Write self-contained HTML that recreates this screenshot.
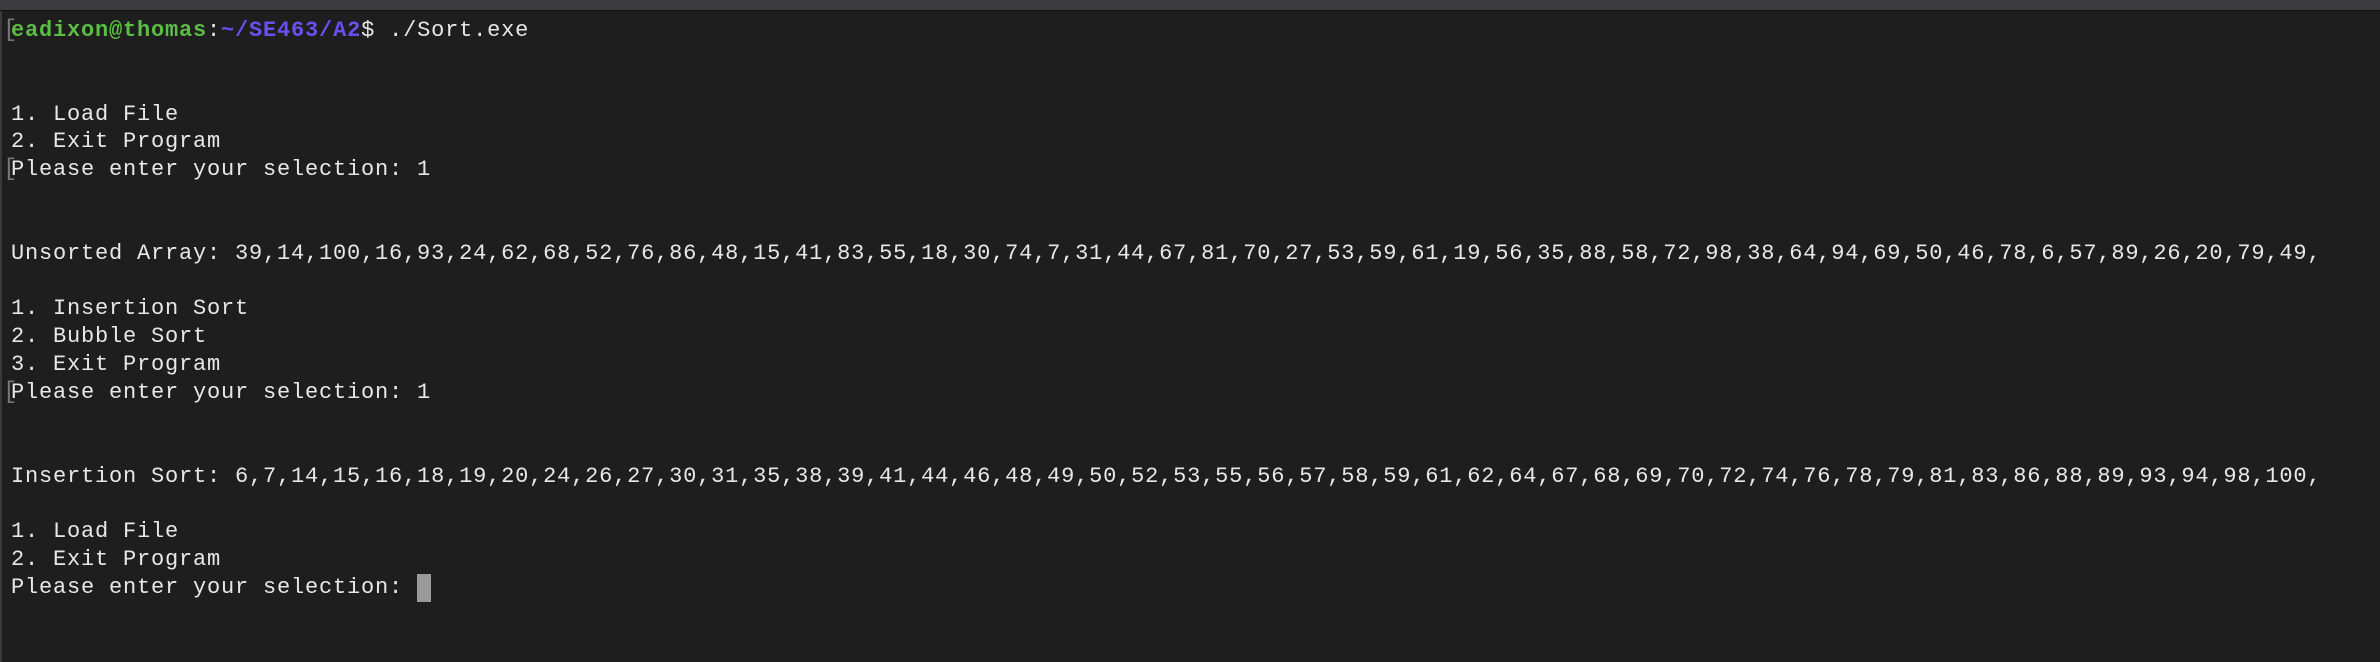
<!DOCTYPE html>
<html><head><meta charset="utf-8"><style>
html,body{margin:0;padding:0;width:2380px;height:662px;overflow:hidden;background:#1e1e1e;}
.top{position:absolute;left:0;top:0;width:2380px;height:10px;background:#3b3a3f;border-bottom:1px solid #111;}
.lb{position:absolute;left:0;top:11px;width:2px;height:651px;background:#3a3a3a;}
pre{position:absolute;left:11px;top:17px;margin:0;font-family:"Liberation Mono",monospace;font-size:22px;letter-spacing:0.8px;line-height:27.85px;color:#e8e8e8;white-space:pre;}
.g{color:#5cbd45;font-weight:bold}
.b{color:#6a4ff2;font-weight:bold}
.br{position:absolute;left:3px;font-family:"Liberation Mono",monospace;font-size:24px;color:#777;line-height:27.85px;}
.cur{display:inline-block;width:14px;height:28px;background:#9a9a9a;vertical-align:top;}
</style></head><body>
<div class="top"></div><div class="lb"></div>
<div class="br" style="top:17px">[</div>
<div class="br" style="top:156px">[</div>
<div class="br" style="top:379px">[</div>
<pre><span class="g">eadixon@thomas</span>:<span class="b">~/SE463/A2</span>$ ./Sort.exe


1. Load File
2. Exit Program
Please enter your selection: 1


Unsorted Array: 39,14,100,16,93,24,62,68,52,76,86,48,15,41,83,55,18,30,74,7,31,44,67,81,70,27,53,59,61,19,56,35,88,58,72,98,38,64,94,69,50,46,78,6,57,89,26,20,79,49,

1. Insertion Sort
2. Bubble Sort
3. Exit Program
Please enter your selection: 1


Insertion Sort: 6,7,14,15,16,18,19,20,24,26,27,30,31,35,38,39,41,44,46,48,49,50,52,53,55,56,57,58,59,61,62,64,67,68,69,70,72,74,76,78,79,81,83,86,88,89,93,94,98,100,

1. Load File
2. Exit Program
Please enter your selection: <span class="cur"></span></pre>
</body></html>
